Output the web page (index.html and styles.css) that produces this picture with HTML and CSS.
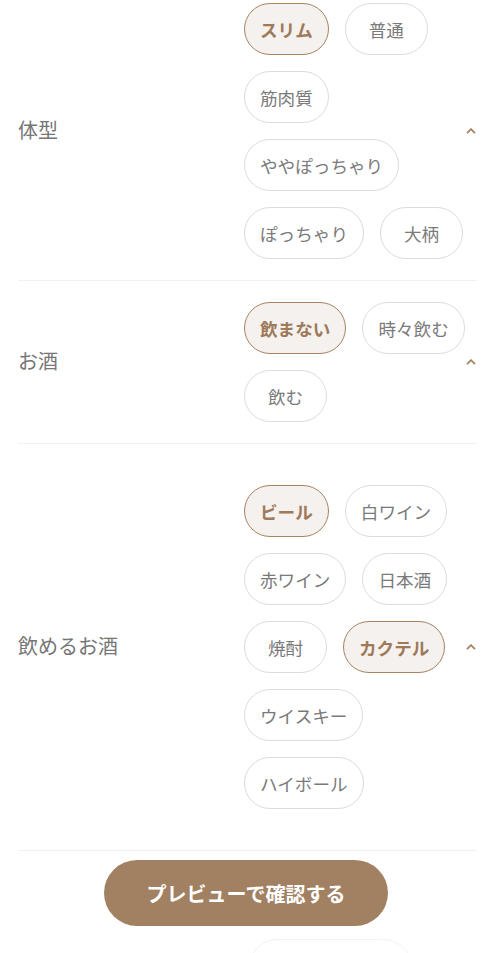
FILE: index.html
```html
<!DOCTYPE html>
<html lang="ja">
    <head>
        <meta charset="utf-8">
        <title>プロフィール編集</title>
        <link rel="stylesheet" href="styles.css">
    </head>
    <body>
        <main class="profile-form">
            <div class="field-row first">
                <div class="field-label">体型</div>
                <div class="chips">
                    <span class="chip selected">スリム</span>
                    <span class="chip">普通</span>
                    <span class="chip">筋肉質</span>
                    <span class="chip">ややぽっちゃり</span>
                    <span class="chip">ぽっちゃり</span>
                    <span class="chip">大柄</span>
                </div>
                <div class="toggle">
                    <svg width="10" height="6" viewBox="0 0 10 6"><polyline points="1,5.2 5,1.2 9,5.2" fill="none" stroke="#a58262" stroke-width="1.8"/></svg>
                </div>
            </div>
            <div class="field-row">
                <div class="field-label">お酒</div>
                <div class="chips">
                    <span class="chip selected">飲まない</span>
                    <span class="chip">時々飲む</span>
                    <span class="chip">飲む</span>
                </div>
                <div class="toggle">
                    <svg width="10" height="6" viewBox="0 0 10 6"><polyline points="1,5.2 5,1.2 9,5.2" fill="none" stroke="#a58262" stroke-width="1.8"/></svg>
                </div>
            </div>
            <div class="field-row wide">
                <div class="field-label">飲めるお酒</div>
                <div class="chips">
                    <span class="chip selected">ビール</span>
                    <span class="chip">白ワイン</span>
                    <span class="chip">赤ワイン</span>
                    <span class="chip">日本酒</span>
                    <span class="chip">焼酎</span>
                    <span class="chip selected">カクテル</span>
                    <span class="chip">ウイスキー</span>
                    <span class="chip">ハイボール</span>
                </div>
                <div class="toggle">
                    <svg width="10" height="6" viewBox="0 0 10 6"><polyline points="1,5.2 5,1.2 9,5.2" fill="none" stroke="#a58262" stroke-width="1.8"/></svg>
                </div>
            </div>
            <div class="actions">
                <button class="preview-btn">プレビューで確認する</button>
                <div class="next-card"></div>
            </div>
        </main>
    </body>
</html>
```

FILE: styles.css
```css
body {
    margin: 0;
    padding: 0;
    background: #ffffff;
    font-family: "Noto Sans CJK JP", "Noto Sans", sans-serif;
    overflow: hidden;
}

.profile-form {
    padding: 0 18px;
}

.field-row {
    display: grid;
    grid-template-columns: 226px 1fr 12px;
    align-items: center;
    padding: 21px 0;
    border-bottom: 1px solid #f1f1f1;
}

.field-row.first {
    padding-top: 3px;
}

.field-row.wide {
    padding: 41px 0;
}

.field-label {
    font-size: 20px;
    color: #767676;
    margin-top: -3px;
}

.chips {
    display: flex;
    flex-wrap: wrap;
    gap: 16px;
}

.chip {
    box-sizing: border-box;
    min-width: 83px;
    height: 52px;
    padding: 0 15px;
    display: flex;
    align-items: center;
    justify-content: center;
    border: 1px solid #dcdcdc;
    border-radius: 26px;
    font-size: 17.6px;
    color: #7a7a7a;
    background: #ffffff;
}

.chip.selected {
    border-color: #a88461;
    background: #f5f1ee;
    color: #9d7a5a;
    font-weight: bold;
}

.toggle {
    display: flex;
    justify-content: center;
}

.actions {
    display: flex;
    flex-direction: column;
    align-items: center;
    padding-top: 9px;
}

.preview-btn {
    width: 284px;
    height: 66px;
    border: none;
    border-radius: 33px;
    background: #a28163;
    color: #ffffff;
    font-family: inherit;
    font-size: 20px;
    font-weight: bold;
    margin-left: -3px;
}

.next-card {
    box-sizing: border-box;
    margin-top: 13px;
    margin-left: 166px;
    width: 165px;
    height: 60px;
    border: 1px solid #f2f2f2;
    border-radius: 30px;
}
```
